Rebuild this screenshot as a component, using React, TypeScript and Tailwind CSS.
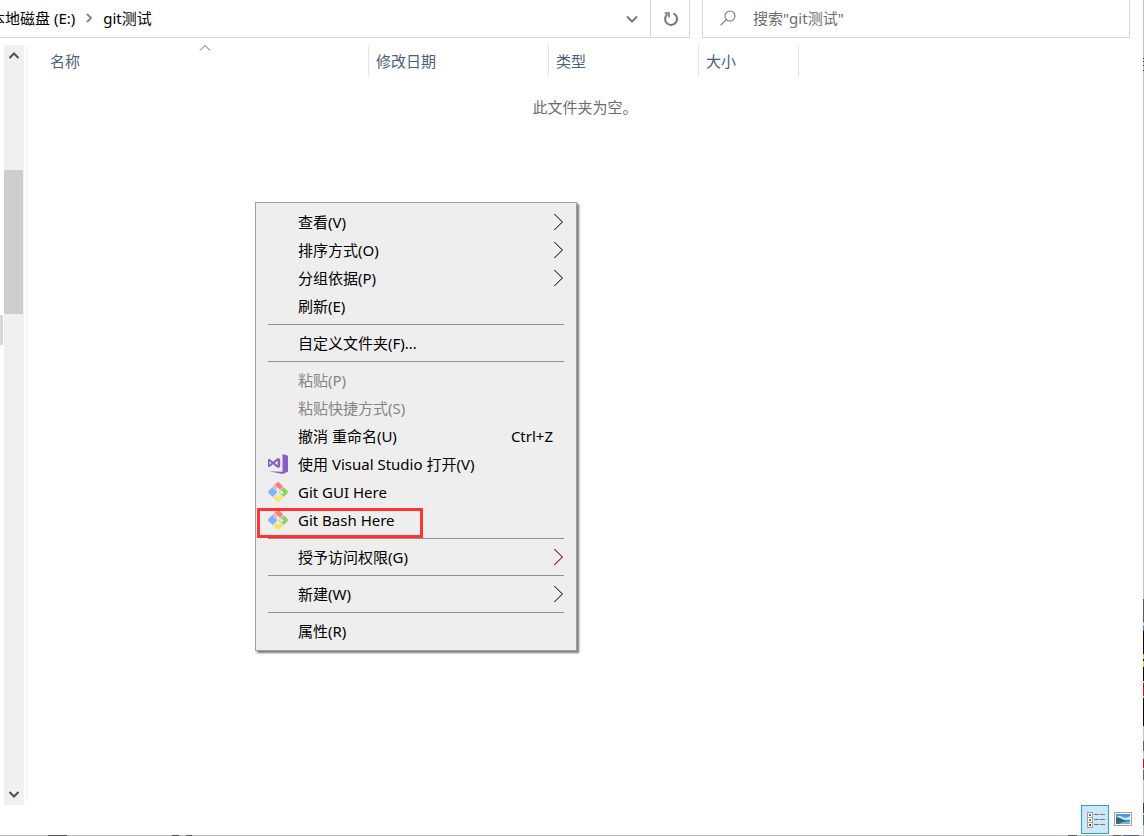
import React from "react";

type Entry =
  | { kind: "separator" }
  | {
      kind: "item";
      label: string;
      icon?: "vs" | "git";
      submenu?: boolean;
      warm?: boolean;
      shortcut?: string;
      disabled?: boolean;
      marked?: boolean;
    };

const entries: Entry[] = [
  { kind: "item", label: "查看(V)", submenu: true },
  { kind: "item", label: "排序方式(O)", submenu: true },
  { kind: "item", label: "分组依据(P)", submenu: true },
  { kind: "item", label: "刷新(E)" },
  { kind: "separator" },
  { kind: "item", label: "自定义文件夹(F)..." },
  { kind: "separator" },
  { kind: "item", label: "粘贴(P)", disabled: true },
  { kind: "item", label: "粘贴快捷方式(S)", disabled: true },
  { kind: "item", label: "撤消 重命名(U)", shortcut: "Ctrl+Z" },
  { kind: "item", label: "使用 Visual Studio 打开(V)", icon: "vs" },
  { kind: "item", label: "Git GUI Here", icon: "git" },
  { kind: "item", label: "Git Bash Here", icon: "git", marked: true },
  { kind: "separator" },
  { kind: "item", label: "授予访问权限(G)", submenu: true, warm: true },
  { kind: "separator" },
  { kind: "item", label: "新建(W)", submenu: true },
  { kind: "separator" },
  { kind: "item", label: "属性(R)" },
];

function GitIcon() {
  return (
    <svg viewBox="0 0 20 20" className="size-5" aria-hidden="true">
      <path d="M8.8 .6Q10 -.5 11.2 .6L15.2 4.7L10.4 9.4L4.8 4.4Z" fill="#ff7f7f" />
      <path d="M4.3 5L9.5 10L4.8 15L.6 11.2Q-.5 10 .6 8.8Z" fill="#80b3ff" />
      <path d="M15.8 5.2L19.4 8.8Q20.5 10 19.4 11.2L15.6 15L10.6 10Z" fill="#8dd35f" />
      <path d="M10 10.4L15 15.6L11.2 19.4Q10 20.5 8.8 19.4L5.2 15.8Z" fill="#ffe066" />
      <path d="M6.3 3.5L10 7.2V14.2M10 7.4L13.8 11" fill="none" stroke="#eeeeee" strokeWidth="1.2" />
      <circle cx="10" cy="7.3" r="1.3" fill="#eeeeee" />
      <circle cx="13.8" cy="10.4" r="1.5" fill="#eeeeee" />
      <circle cx="10" cy="13.8" r="1.4" fill="#eeeeee" />
    </svg>
  );
}

function VisualStudioIcon() {
  return (
    <svg viewBox="0 0 20 20" className="size-5" aria-hidden="true">
      <path d="M14.5 0L20 1.8V17.8L14.5 20L1 17.2L14.5 17.8Z" fill="#865fc5" />
      <path
        fillRule="evenodd"
        d="M1.2 4.8L5 7.7L9.6 4L12.2 5V13L9.6 14L5 10.3L1.2 13.2L0 12.6V5.4ZM1.5 7.2V10.8L3.6 9ZM6.8 9L9.7 11.2V6.8Z"
        fill="#865fc5"
      />
    </svg>
  );
}

function SubmenuArrow({ warm }: { warm?: boolean }) {
  return (
    <svg viewBox="0 0 12 18" className="h-[18px] w-3" fill="none" aria-hidden="true">
      <path d="M1.6 1L9.6 9L1.6 17" stroke="#ffe2a0" strokeWidth=".8" />
      <path d="M2.8 1L10.8 9L2.8 17" stroke={warm ? "#d06a6a" : "#3a9ad8"} strokeWidth=".8" />
      <path d="M2.2 1L10.2 9L2.2 17" stroke={warm ? "#4a0808" : "#08202c"} strokeWidth=".9" />
    </svg>
  );
}

function Chevron({ d, className }: { d: string; className: string }) {
  return (
    <svg viewBox="0 0 12 12" className={className} fill="none" stroke="currentColor" aria-hidden="true">
      <path d={d} />
    </svg>
  );
}

function AddressBar() {
  return (
    <div className="flex h-[38px] gap-3 pr-[13px]">
      <nav aria-label="路径" className="flex min-w-0 flex-1 border-r border-b border-[#d9d9d9]">
        <div className="flex min-w-0 flex-1 items-center overflow-hidden pb-px text-black">
          <a href="#drive" className="-ml-[10px] shrink-0">
            本地磁盘 (E:)
          </a>
          <Chevron d="M4 2L8 6L4 10" className="ml-2 size-3 shrink-0 stroke-2 text-[#888888]" />
          <a href="#folder" className="ml-2 shrink-0">
            git测试
          </a>
        </div>
        <button type="button" aria-label="以前的位置" className="flex w-9 items-center justify-center text-[#777777]">
          <Chevron d="M1 3.5L6 8.5L11 3.5" className="size-3 stroke-2" />
        </button>
        <button
          type="button"
          aria-label="刷新"
          className="flex w-[39px] items-center justify-center border-l border-[#d9d9d9] pl-px text-[#777777]"
        >
          <svg viewBox="0 0 16 16" className="size-4" fill="none" stroke="currentColor" strokeWidth="2" aria-hidden="true">
            <path d="M10.4 2.4A6 6 0 1 1 4.4 3.2" />
            <path d="M1.6 2H6V6.6" strokeWidth="1.6" />
          </svg>
        </button>
      </nav>
      <label className="flex w-[428px] items-center border-x border-b border-[#d9d9d9] pb-px pl-4">
        <svg viewBox="0 0 18 18" className="size-[18px] text-[#777777]" fill="none" stroke="currentColor" strokeWidth="1.1" aria-hidden="true">
          <circle cx="11" cy="7" r="5" />
          <path d="M7.4 10.6L1.5 16.4" />
        </svg>
        <input
          type="text"
          aria-label="搜索"
          placeholder={'搜索"git测试"'}
          className="ml-4 min-w-0 flex-1 bg-transparent outline-none placeholder:text-[#6d6d6d]"
        />
      </label>
    </div>
  );
}

function ScrollBar() {
  return (
    <div className="flex w-[27px] shrink-0 border-r border-[#f5f5f5]">
      <div className="mt-[270px] mr-px h-[30px] w-[3px] bg-[#d9d9d9]" />
      <div className="flex w-5 flex-col bg-[#f0f0f0]">
        <button type="button" aria-label="向上滚动" className="flex h-5 items-center justify-center text-[#505050]">
          <Chevron d="M1.5 9L6 4.5L10.5 9" className="size-3 stroke-2" />
        </button>
        <div className="flex-1 pt-[105px]">
          <div className="h-36 w-[19px] bg-[#cdcdcd]" />
        </div>
        <button type="button" aria-label="向下滚动" className="flex h-5 items-center justify-center text-[#505050]">
          <Chevron d="M1.5 3L6 7.5L10.5 3" className="size-3 stroke-2" />
        </button>
      </div>
    </div>
  );
}

function FileTable() {
  const head = "h-8 border-r border-[#e5e5e5] p-0 pl-[7px] text-left font-normal text-[#4c607a]";
  return (
    <table className="w-full table-fixed border-separate border-spacing-0 self-start">
      <colgroup>
        <col className="w-[342px]" />
        <col className="w-[180px]" />
        <col className="w-[150px]" />
        <col className="w-[100px]" />
        <col />
      </colgroup>
      <thead>
        <tr>
          <th className="relative h-8 border-r border-[#e5e5e5] p-0 pl-[23px] text-left font-normal text-[#4c607a]">
            名称
            <Chevron d="M2 8.5L7 3.5L12 8.5" className="absolute -top-[3px] left-1/2 size-3 overflow-visible text-[#666666]" />
          </th>
          <th className={head}>修改日期</th>
          <th className={head}>类型</th>
          <th className={head}>大小</th>
          <td />
        </tr>
      </thead>
      <tbody>
        <tr>
          <td colSpan={5} className="pt-5 text-center text-[#6d6d6d]">
            此文件夹为空。
          </td>
        </tr>
      </tbody>
    </table>
  );
}

function ContextMenu() {
  return (
    <div
      role="menu"
      className="absolute top-[202px] left-[255px] w-[322px] border border-[#a0a0a0] bg-[#eeeeee] py-[5px] shadow-[2px_2px_2px_#777777]"
    >
      {entries.map((entry, i) =>
        entry.kind === "separator" ? (
          <div key={i} role="separator" className="mx-3 flex h-[9px] items-center">
            <div className="h-px flex-1 bg-[#919191]" />
          </div>
        ) : (
          <button
            key={i}
            type="button"
            role="menuitem"
            disabled={entry.disabled}
            className="relative flex h-7 w-full items-center px-3 text-left text-black disabled:text-[#858585]"
          >
            <span className="mr-[10px] size-5 shrink-0">
              {entry.icon === "git" && <GitIcon />}
              {entry.icon === "vs" && <VisualStudioIcon />}
            </span>
            <span className="flex-1 whitespace-nowrap">{entry.label}</span>
            {entry.shortcut && <span className="mr-[11px]">{entry.shortcut}</span>}
            {entry.submenu && <SubmenuArrow warm={entry.warm} />}
            {entry.marked && (
              <span className="pointer-events-none absolute top-[2px] left-px z-10 h-[30px] w-[166px] border-3 border-[#ff3333]" />
            )}
          </button>
        ),
      )}
    </div>
  );
}

function ViewSwitch() {
  return (
    <div className="flex h-[30px] items-start justify-end pr-[6px]">
      <button
        type="button"
        aria-label="详细信息"
        aria-pressed="true"
        className="flex h-[29px] w-7 items-center justify-center border border-[#26a0da] bg-[#cce8f6] pl-px"
      >
        <svg viewBox="0 0 18 16" className="h-4 w-[18px]" shapeRendering="crispEdges" aria-hidden="true">
          <path d="M0 0H6V16H0Z" fill="#a0a0a0" />
          <path d="M1 1H5V5H1ZM1 6H5V10H1ZM1 11H5V15H1Z" fill="#fff" />
          <path d="M2 2H4V4H2Z" fill="#3f7cac" />
          <path d="M2 7H4V9H2Z" fill="#7d8a35" />
          <path d="M2 12H4V14H2Z" fill="#c82a1e" />
          <path d="M7 2H12V3H7ZM13 2H18V3H13ZM7 7H12V8H7ZM13 7H18V8H13ZM7 12H12V13H7ZM13 12H18V13H13Z" fill="#777777" />
        </svg>
      </button>
      <button type="button" aria-label="大缩略图" className="flex h-7 w-7 items-center justify-center">
        <svg viewBox="0 0 18 14" className="h-[14px] w-[18px]" aria-hidden="true">
          <path d="M0 0H18V14H0Z" fill="#a0a0a0" />
          <path d="M1 1H17V13H1Z" fill="#fff" />
          <path d="M2 2H16V12H2Z" fill="#4f94e6" />
          <path d="M2 5Q6 3 9 5T16 4V9H2Z" fill="#c5e5f7" />
          <path d="M2 5L6 6L10 8L16 9V10H2Z" fill="#2d6757" />
          <path d="M2 9L9 9L16 8V12H2Z" fill="#2c6f9d" />
          <path d="M5 12L9 10L16 9V12Z" fill="#75b4d5" />
        </svg>
      </button>
    </div>
  );
}

function RightEdge() {
  return (
    <svg className="w-px shrink-0 bg-[#c4c4c4]" shapeRendering="crispEdges" aria-hidden="true">
      <path d="M0 58h1v1h-1zM0 61h1v1h-1zM0 65h1v1h-1zM0 70h1v1h-1z" fill="#333333" />
      <path d="M0 599h1v23h-1z" fill="#5a5a5a" />
      <path d="M0 626h1v5h-1z" fill="#4a78b0" />
      <path d="M0 631h1v95h-1z" fill="#180508" />
      <path d="M0 654h1v5h-1zM0 661h1v6h-1zM0 681h1v2h-1zM0 696h1v2h-1z" fill="#cccc44" />
      <path d="M0 683h1v3h-1zM0 687h1v9h-1zM0 759h1v9h-1z" fill="#d01018" />
      <path d="M0 741h1v10h-1zM0 770h1v10h-1z" fill="#58686e" />
      <path d="M0 803h1v10h-1z" fill="#3c3c3c" />
      <path d="M0 815h1v10h-1z" fill="#2d8055" />
    </svg>
  );
}

function BottomEdge() {
  return (
    <svg className="h-px w-full shrink-0 bg-[#c0c0c0]" shapeRendering="crispEdges" aria-hidden="true">
      <path d="M48 0h19v1h-19zM172 0h7v1h-7zM186 0h6v1h-6z" fill="#555555" />
      <path d="M1068 0h9v1h-9zM1113 0h8v1h-8z" fill="#665c55" />
      <path d="M1123 0h16v1h-16z" fill="#555b99" />
    </svg>
  );
}

export default function App() {
  return (
    <div className="relative flex min-h-screen overflow-hidden bg-white font-['Noto_Sans','Noto_Sans_CJK_SC',sans-serif] text-[15px] leading-5">
      <div className="flex min-w-0 flex-1 flex-col">
        <AddressBar />
        <main className="flex flex-1 pt-[7px]">
          <ScrollBar />
          <FileTable />
        </main>
        <ViewSwitch />
        <BottomEdge />
      </div>
      <RightEdge />
      <ContextMenu />
    </div>
  );
}
